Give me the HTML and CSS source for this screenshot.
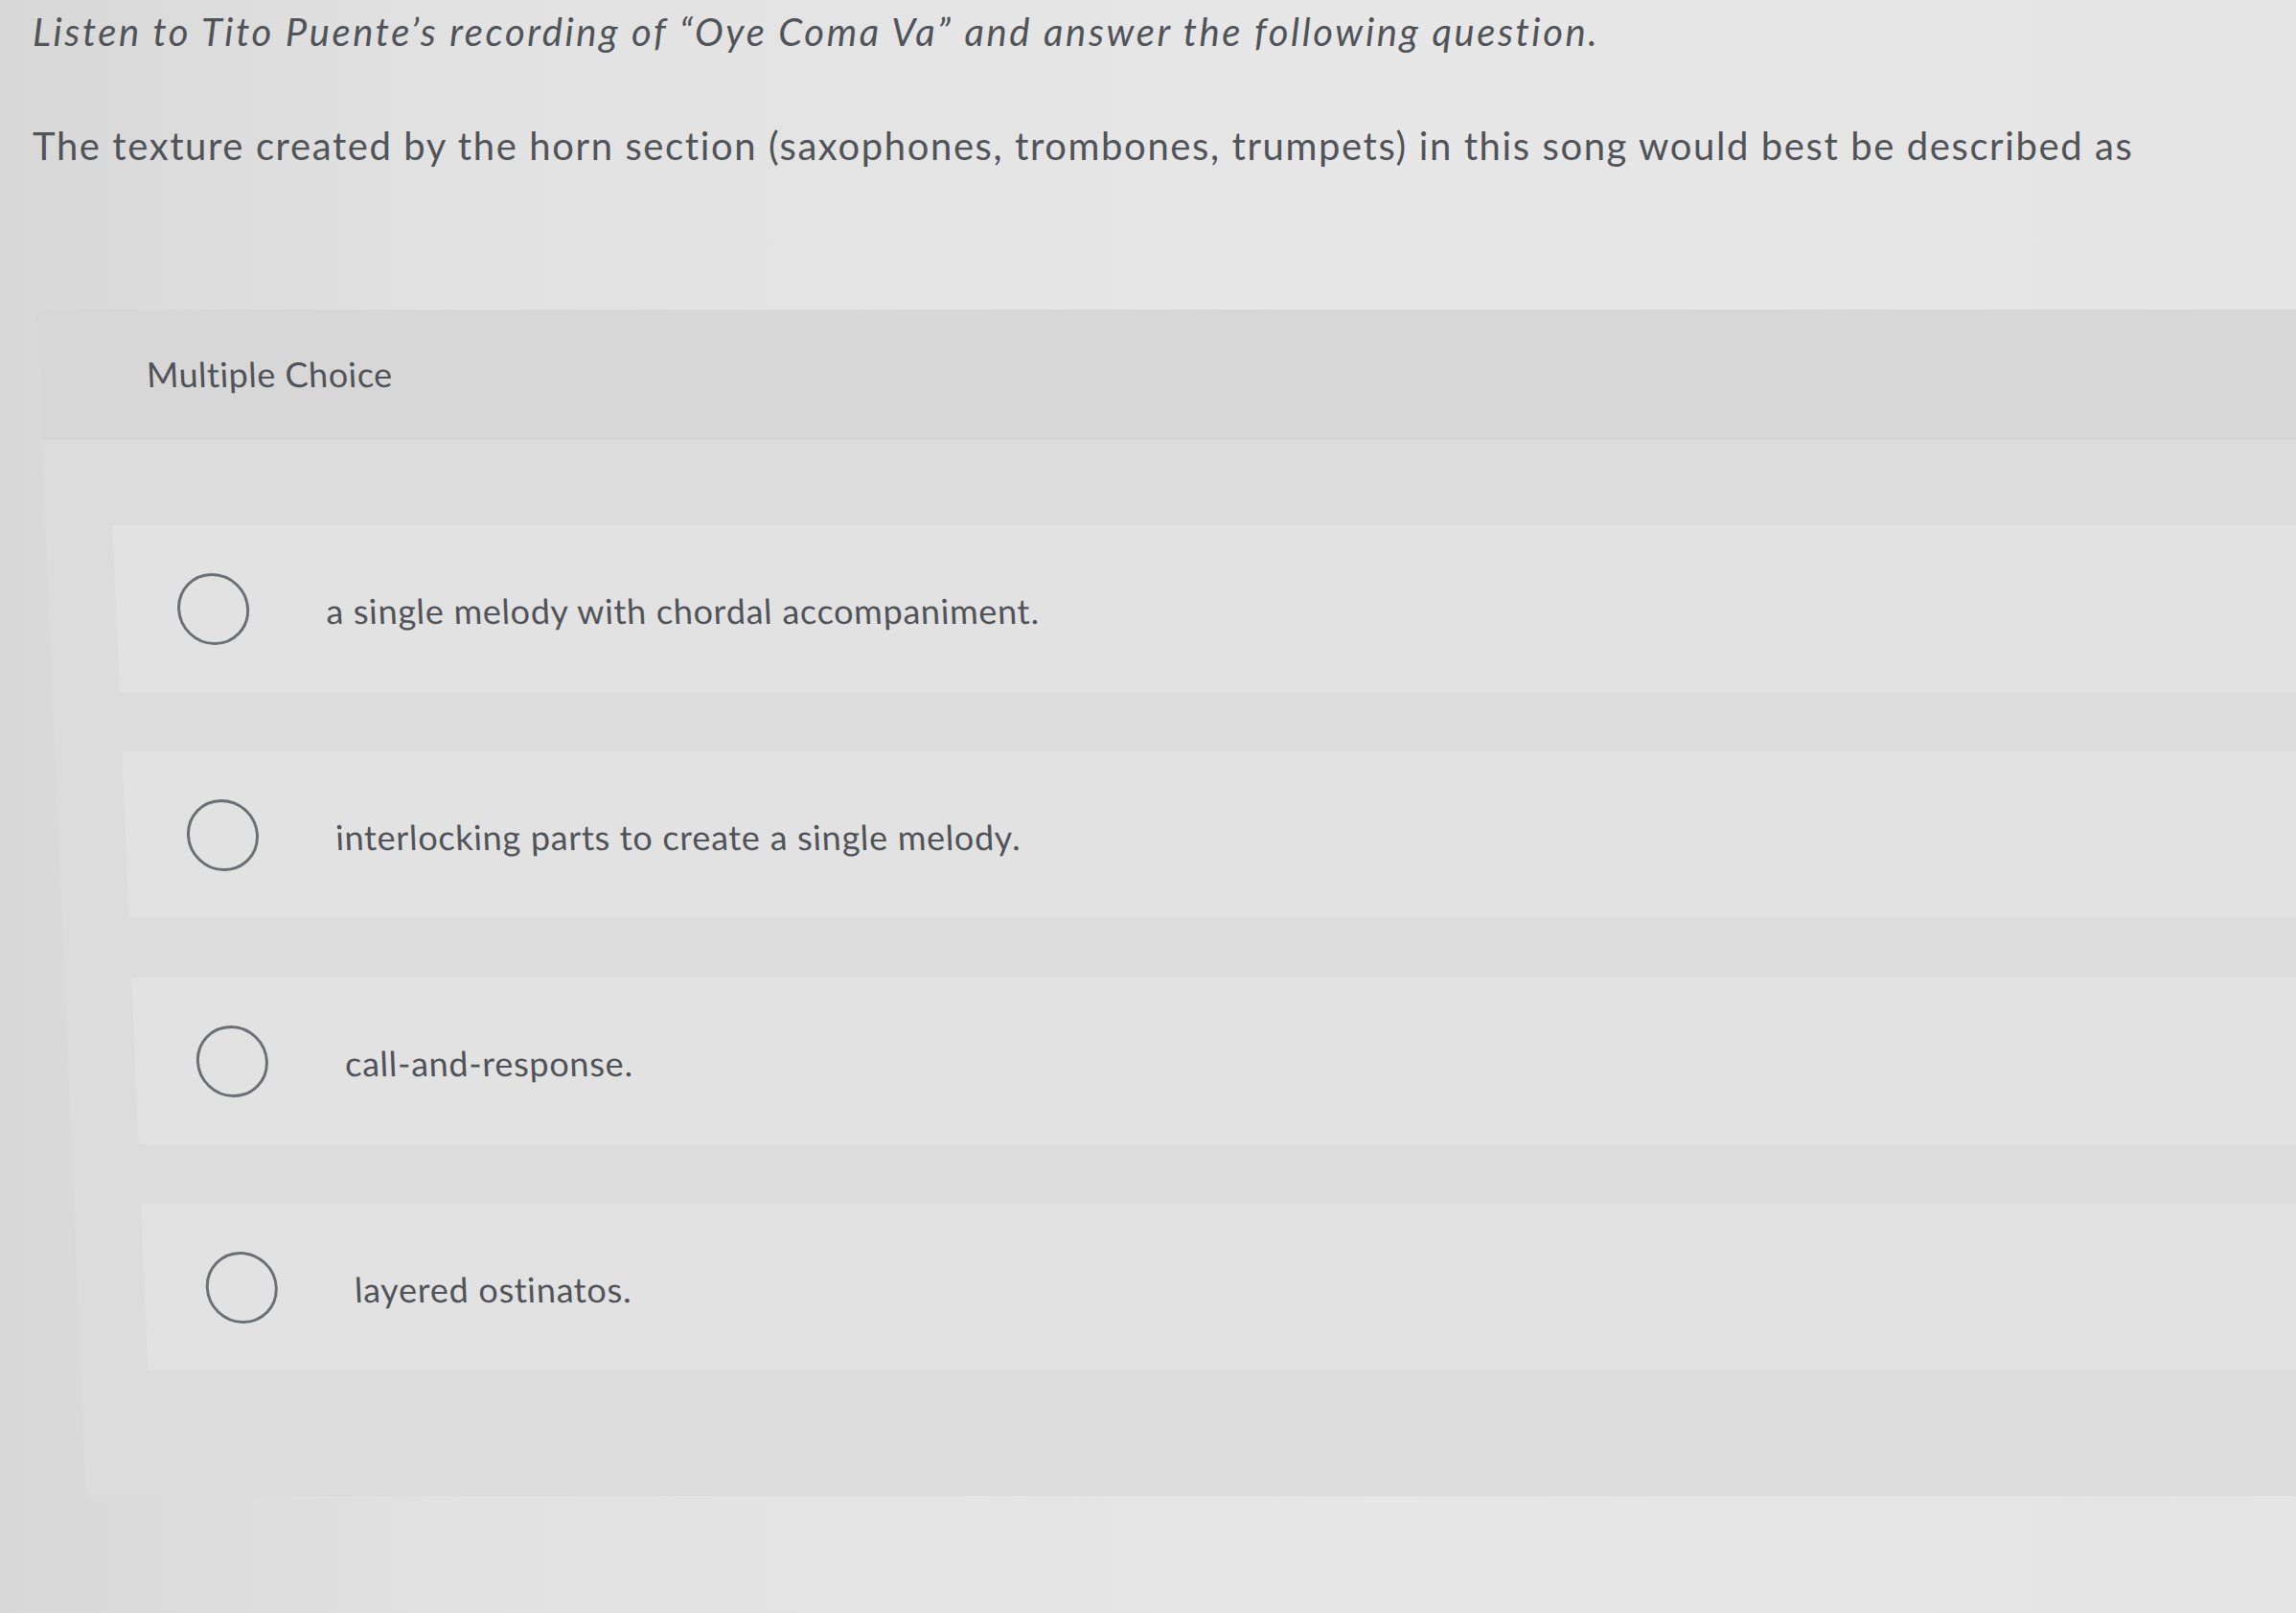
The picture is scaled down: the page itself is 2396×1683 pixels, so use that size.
FILE: index.html
```html
<!DOCTYPE html>
<html lang="en">

<head>
    <meta charset="UTF-8">
    <meta name="viewport" content="width=device-width, initial-scale=1.0">
    <title>Multiple Choice Question</title>
    <link rel="stylesheet" href="styles.css">
</head>

<body>

    <div class="prompt">
        <p class="prompt-intro">Listen to Tito Puente’s recording of “Oye Coma Va” and answer the following question.</p>
        <p class="prompt-question">The texture created by the horn section (saxophones, trombones, trumpets) in this song would best be described as</p>
    </div>

    <div class="question-panel">
        <div class="panel-header">Multiple Choice</div>

        <ul class="choices">
            <li class="choice">
                <span class="radio"></span>
                <span class="choice-text">a single melody with chordal accompaniment.</span>
            </li>
            <li class="choice">
                <span class="radio"></span>
                <span class="choice-text">interlocking parts to create a single melody.</span>
            </li>
            <li class="choice">
                <span class="radio"></span>
                <span class="choice-text">call-and-response.</span>
            </li>
            <li class="choice">
                <span class="radio"></span>
                <span class="choice-text">layered ostinatos.</span>
            </li>
        </ul>
    </div>

</body>

</html>
```

FILE: styles.css
```css
body {
    margin: 0;
    font-family: Lato, 'Open Sans', sans-serif;
    color: #505358;
    background: linear-gradient(90deg, #d8d8d8 0%, #e2e2e2 20%, #e7e7e7 60%, #e5e5e5 100%);
    min-height: 100vh;
    overflow: hidden;
}

.prompt {
    padding: 9px 0 0 34px;
}

.prompt p {
    margin: 0;
    font-size: 40px;
    line-height: 48px;
}

.prompt-intro {
    font-style: italic;
    letter-spacing: 2.6px;
}

.prompt-question {
    margin-top: 71px !important;
    letter-spacing: 1.6px;
}

.question-panel {
    margin: 147px 0 0 38px;
    width: 2500px;
    background-color: #dcdcdc;
    padding-bottom: 131px;
    transform: skewX(2.4deg);
    transform-origin: top left;
}

.panel-header {
    height: 136px;
    box-sizing: border-box;
    padding: 45px 0 0 112px;
    font-size: 36px;
    line-height: 44px;
    letter-spacing: 0.5px;
    background-color: #d7d7d7;
}

.choices {
    list-style: none;
    margin: 89px 0 0 0;
    padding: 0 0 0 70px;
    display: flex;
    flex-direction: column;
    gap: 62px;
}

.choice {
    display: flex;
    align-items: center;
    height: 174px;
    padding-left: 64px;
    background-color: #e2e2e2;
}

.radio {
    width: 75px;
    height: 75px;
    box-sizing: border-box;
    border: 3px solid #6b6f74;
    border-radius: 50%;
    margin-right: 80px;
    flex-shrink: 0;
}

.choice-text {
    font-size: 36px;
    line-height: 44px;
    letter-spacing: 0.7px;
    margin-top: 4px;
}
```
